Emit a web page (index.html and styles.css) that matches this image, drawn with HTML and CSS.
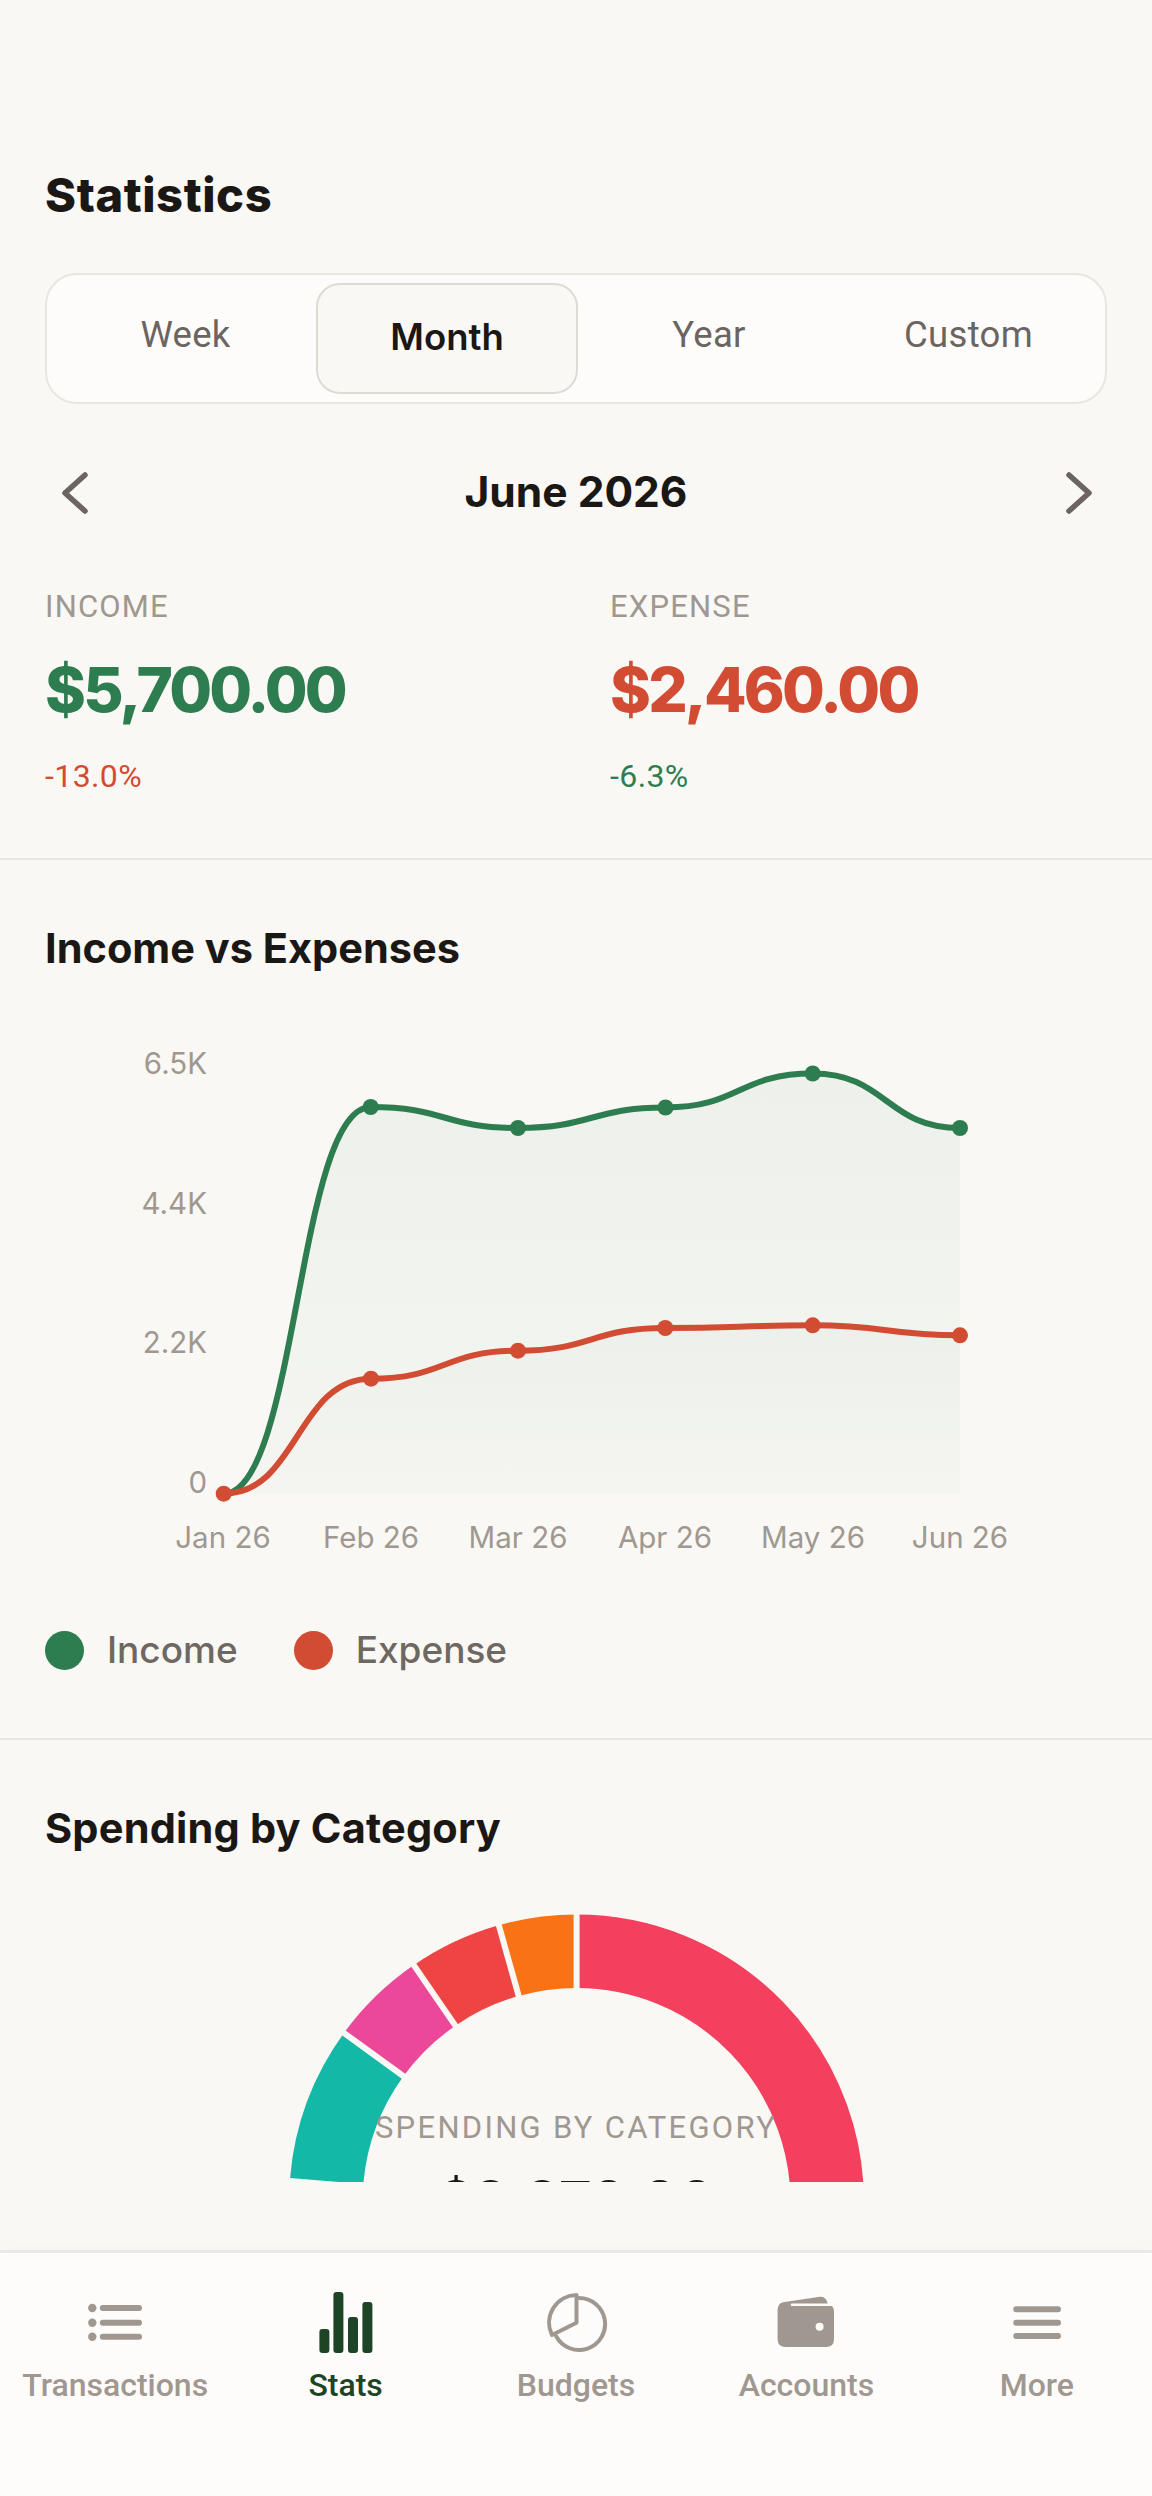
FILE: index.html
```html
<!DOCTYPE html>
<html lang="en">
<head>
<meta charset="utf-8">
<title>Statistics</title>
<link rel="stylesheet" href="styles.css">
</head>
<body>
<div class="app">
  <main class="content">
    <section class="summary">
      <h1 class="page-title">Statistics</h1>
      <div class="tabs">
        <div class="tab">Week</div>
        <div class="tab tab-active">Month</div>
        <div class="tab">Year</div>
        <div class="tab">Custom</div>
      </div>
      <div class="period">
        <svg class="chev" viewBox="0 0 40 48"><path d="M30 3 L10 21 L30 39"/></svg>
        <div class="period-label">June 2026</div>
        <svg class="chev" viewBox="0 0 40 48"><path d="M12 3 L32 21 L12 39"/></svg>
      </div>
      <div class="totals">
        <div>
          <div class="total-label">INCOME</div>
          <div class="total-value green">$5,700.00</div>
          <div class="total-change red">-13.0%</div>
        </div>
        <div>
          <div class="total-label">EXPENSE</div>
          <div class="total-value red">$2,460.00</div>
          <div class="total-change green">-6.3%</div>
        </div>
      </div>
    </section>

    <section class="trend">
      <h2 class="section-title">Income vs Expenses</h2>
      <svg class="line-chart" viewBox="0 1040 1152 530">
        <defs>
          <linearGradient id="areaA" x1="0" y1="0" x2="0" y2="1">
            <stop offset="0" stop-color="#2e7d50" stop-opacity="0.055"/>
            <stop offset="1" stop-color="#2e7d50" stop-opacity="0.022"/>
          </linearGradient>
          <linearGradient id="areaB" x1="0" y1="0" x2="0" y2="1">
            <stop offset="0" stop-color="#2e5d50" stop-opacity="0.025"/>
            <stop offset="1" stop-color="#2e5d50" stop-opacity="0"/>
          </linearGradient>
        </defs>
        <path fill="url(#areaA)" d="M223.7 1493.7 C297.3 1493.7 297.3 1107 370.7 1107 C444.3 1107 444.3 1128 518 1128 C591.7 1128 591.7 1107.5 665.5 1107.5 C739 1107.5 739 1073.5 812.7 1073.5 C886.3 1073.5 886.3 1128 960 1128 V1493.7 Z"/>
        <path fill="url(#areaB)" d="M223.7 1493.7 C297.3 1493.7 297.3 1378.7 371 1378.7 C444.5 1378.7 444.5 1350.7 518 1350.7 C591.7 1350.7 591.7 1328 665.3 1328 C739 1328 739 1325.3 812.7 1325.3 C886.3 1325.3 886.3 1335.3 960 1335.3 V1493.7 Z"/>
        <g class="axis">
          <text x="207" y="1074" text-anchor="end">6.5K</text>
          <text x="207" y="1214" text-anchor="end">4.4K</text>
          <text x="207" y="1353" text-anchor="end">2.2K</text>
          <text x="207" y="1493" text-anchor="end">0</text>
          <text x="223" y="1548" text-anchor="middle">Jan 26</text>
          <text x="371" y="1548" text-anchor="middle">Feb 26</text>
          <text x="518" y="1548" text-anchor="middle">Mar 26</text>
          <text x="665" y="1548" text-anchor="middle">Apr 26</text>
          <text x="813" y="1548" text-anchor="middle">May 26</text>
          <text x="960" y="1548" text-anchor="middle">Jun 26</text>
        </g>
        <path class="line line-income" d="M223.7 1493.7 C297.3 1493.7 297.3 1107 370.7 1107 C444.3 1107 444.3 1128 518 1128 C591.7 1128 591.7 1107.5 665.5 1107.5 C739 1107.5 739 1073.5 812.7 1073.5 C886.3 1073.5 886.3 1128 960 1128"/>
        <g class="dots-income">
          <circle cx="370.7" cy="1107" r="8"/>
          <circle cx="518" cy="1128" r="8"/>
          <circle cx="665.5" cy="1107.5" r="8"/>
          <circle cx="812.7" cy="1073.5" r="8"/>
          <circle cx="960" cy="1128" r="8"/>
        </g>
        <path class="line line-expense" d="M223.7 1493.7 C297.3 1493.7 297.3 1378.7 371 1378.7 C444.5 1378.7 444.5 1350.7 518 1350.7 C591.7 1350.7 591.7 1328 665.3 1328 C739 1328 739 1325.3 812.7 1325.3 C886.3 1325.3 886.3 1335.3 960 1335.3"/>
        <g class="dots-expense">
          <circle cx="223.7" cy="1493.7" r="8"/>
          <circle cx="371" cy="1378.7" r="8"/>
          <circle cx="518" cy="1350.7" r="8"/>
          <circle cx="665.3" cy="1328" r="8"/>
          <circle cx="812.7" cy="1325.3" r="8"/>
          <circle cx="960" cy="1335.3" r="8"/>
        </g>
      </svg>
      <div class="legend">
        <div class="legend-item"><span class="swatch swatch-income"></span>Income</div>
        <div class="legend-item"><span class="swatch swatch-expense"></span>Expense</div>
      </div>
    </section>

    <section class="categories">
      <h2 class="section-title section-title-wide">Spending by Category</h2>
      <div class="donut">
        <svg class="donut-svg" viewBox="0 0 1152 282">
          <g class="arcs">
            <path stroke="#f43f5e" d="M576.6 51.25 A250.75 250.75 0 0 1 827 312"/>
            <path stroke="#14b8a6" d="M326.7 281 A250.75 250.75 0 0 1 373.7 154.6"/>
            <path stroke="#ec4899" d="M373.7 154.6 A250.75 250.75 0 0 1 434.6 95.4"/>
            <path stroke="#ef4444" d="M434.6 95.4 A250.75 250.75 0 0 1 508.7 60.6"/>
            <path stroke="#f97316" d="M508.7 60.6 A250.75 250.75 0 0 1 576.6 51.25"/>
          </g>
          <g class="gaps">
            <path d="M410.8 181.5 L337.9 128.6"/>
            <path d="M460.5 133.1 L409.5 58.9"/>
            <path d="M521.1 104.6 L496.8 18"/>
            <path d="M576.6 97 V7"/>
          </g>
        </svg>
        <div class="donut-center">
          <div class="donut-label">SPENDING BY CATEGORY</div>
          <div class="donut-value">$2,370.00</div>
        </div>
      </div>
    </section>
  </main>

  <nav class="nav">
    <div class="nav-item">
      <svg class="nav-icon" viewBox="0 0 64 64">
        <circle class="fill" cx="9.3" cy="18" r="4.2"/><circle class="fill" cx="9.3" cy="32.7" r="4.2"/><circle class="fill" cx="9.3" cy="46.7" r="4.2"/>
        <path class="bar" d="M19.8 18 H56 M19.8 32.7 H56 M19.8 46.7 H56"/>
      </svg>
      <span>Transactions</span>
    </div>
    <div class="nav-item nav-active">
      <svg class="nav-icon" viewBox="0 0 64 64">
        <rect class="fill" x="5.4" y="39" width="10" height="24" rx="3"/>
        <rect class="fill" x="19.4" y="2" width="10" height="61" rx="3"/>
        <rect class="fill" x="34" y="27" width="10" height="36" rx="3"/>
        <rect class="fill" x="48.4" y="12" width="10" height="51" rx="3"/>
      </svg>
      <span>Stats</span>
    </div>
    <div class="nav-item">
      <svg class="nav-icon" viewBox="0 0 64 64">
        <path class="outline" d="M32.5 5 A27.7 27.7 0 0 0 8 45 L32.5 32.7 Z"/>
        <path class="outline" d="M35.2 8 A26 26 0 1 1 12.3 46.5"/>
      </svg>
      <span>Budgets</span>
    </div>
    <div class="nav-item">
      <svg class="nav-icon" viewBox="0 0 64 64">
        <path class="fill" d="M3.6 21 C3.6 15 6 12.5 10.5 12 L46 6.8 Q52 6 53.5 13.5 Q60 15 60 22 V49 Q60 57 52 57 H11.6 Q3.6 57 3.6 49 Z"/>
        <path class="slit" d="M18 14.7 H62"/>
        <circle class="hole" cx="45.6" cy="36.7" r="4"/>
      </svg>
      <span>Accounts</span>
    </div>
    <div class="nav-item">
      <svg class="nav-icon" viewBox="0 0 64 64">
        <path class="bar" d="M11.2 19.3 H53 M11.2 32.7 H53 M11.2 46 H53"/>
      </svg>
      <span>More</span>
    </div>
  </nav>
</div>
</body>
</html>
```
FILE: styles.css
```css
* { box-sizing: border-box; }
html, body { margin: 0; padding: 0; }
body { background: #f9f8f4; font-family: "Roboto", "Inter", sans-serif; color: #1a1714; }
.app { width: 1152px; height: 2496px; display: flex; flex-direction: column; overflow: hidden; }
.content { flex: 1; min-height: 0; overflow: hidden; }

.summary { height: 860px; padding: 168px 45px 0; border-bottom: 2px solid #e8e6e1; }
.page-title { margin: 0; font: 800 47px/54px "Inter", sans-serif; letter-spacing: 0.6px; }

.tabs { margin-top: 51px; height: 131px; display: grid; grid-template-columns: 261px 262px 262px 1fr; padding: 8px; background: #fdfcfa; border: 2px solid #e8e6e1; border-radius: 32px; }
.tab { display: flex; align-items: center; justify-content: center; padding-bottom: 8px; font-size: 36.5px; letter-spacing: 0.3px; color: #6b6460; border: 2px solid transparent; border-radius: 24px; }
.tab-active { padding-bottom: 4px; background: #f9f8f4; border-color: #dedbd5; font: 600 36.5px "Inter", sans-serif; letter-spacing: 0; color: #1a1714; }

.period { margin-top: 58px; display: flex; align-items: center; justify-content: space-between; padding: 0 10px 0 0; height: 60px; }
.chev { width: 40px; height: 48px; margin-top: 8px; }
.chev path { fill: none; stroke: #6b6460; stroke-width: 5.5; stroke-linecap: round; stroke-linejoin: round; }
.period-label { font: 700 42.5px/60px "Inter", sans-serif; letter-spacing: 0; }
.period .chev:first-child { margin-left: 10px; }

.totals { margin-top: 67px; display: grid; grid-template-columns: 497px 497px; column-gap: 68px; }
.total-label { font-size: 31px; line-height: 36px; color: #a09890; letter-spacing: 1.2px; }
.total-value { margin-top: 27px; font: 800 62px/76px "Inter", sans-serif; letter-spacing: -2.8px; }
.total-change { margin-top: 30px; font-size: 32px; line-height: 36px; letter-spacing: 0.4px; }
.green { color: #2e7d50; }
.red { color: #d24b33; }

.trend { height: 880px; padding-top: 64px; border-bottom: 2px solid #e8e6e1; }
.section-title { margin: 0; padding: 0 45px; font: 700 41.5px/48px "Inter", sans-serif; letter-spacing: 0; }
.section-title-wide { letter-spacing: 0.2px; }
.line-chart { display: block; width: 1152px; height: 530px; margin-top: 68px; }
.axis text { font: 400 29.5px "Inter", sans-serif; fill: #a09890; }
.line { fill: none; stroke-width: 6; }
.line-income { stroke: #2e7d50; }
.line-expense { stroke: #d24b33; }
.dots-income { fill: #2e7d50; }
.dots-expense { fill: #d24b33; }

.legend { margin-top: 60px; padding: 0 45px; display: flex; gap: 56px; }
.legend-item { display: flex; align-items: center; gap: 23px; font: 500 37px/40px "Inter", sans-serif; color: #6f6762; }
.swatch { width: 39px; height: 39px; border-radius: 50%; }
.swatch-income { background: #2e7d50; }
.swatch-expense { background: #d24b33; }

.categories { padding-top: 64px; }
.donut { position: relative; height: 282px; margin-top: 48px; overflow: hidden; }
.donut-svg { display: block; width: 1152px; height: 282px; }
.arcs path { fill: none; stroke-width: 73.5; }
.gaps path { fill: none; stroke: #f9f8f4; stroke-width: 6; }
.donut-center { position: absolute; left: 0; right: 0; top: 210px; text-align: center; }
.donut-label { font-size: 31px; line-height: 36px; color: #a09890; letter-spacing: 2.3px; }
.donut-value { margin-top: 22px; font: 700 56px/68px "Inter", sans-serif; letter-spacing: -1px; color: #1a1714; }

.nav { height: 246px; flex: none; display: flex; background: #fdfcfa; border-top: 3px solid #ebe9e5; box-shadow: 0 -3px 20px rgba(0, 0, 0, 0.02); position: relative; }
.nav-item { flex: 1; display: flex; flex-direction: column; align-items: center; padding-top: 37px; font-size: 32px; font-weight: 500; line-height: 36px; color: #a09890; }
.nav-item span { margin-top: 13px; }
.nav-active { color: #1e4426; }
.nav-icon { width: 64px; height: 64px; display: block; }
.nav-icon .fill { fill: currentColor; }
.nav-icon .bar { fill: none; stroke: currentColor; stroke-width: 6; stroke-linecap: round; }
.nav-icon .outline { fill: none; stroke: currentColor; stroke-width: 4; stroke-linejoin: round; stroke-linecap: round; }
.nav-icon .slit { fill: none; stroke: #fdfcfa; stroke-width: 2.5; stroke-linecap: round; }
.nav-icon .hole { fill: #fdfcfa; }
```
